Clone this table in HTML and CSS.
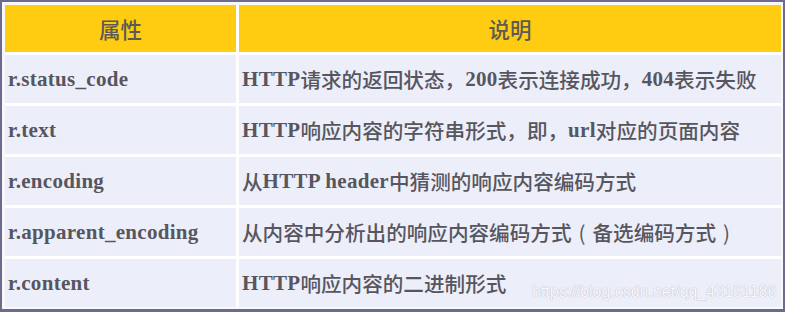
FILE: index.html
```html
<!DOCTYPE html>
<html lang="zh-CN">
<head>
<meta charset="utf-8">
<title>Requests Response 属性</title>
<link rel="stylesheet" href="styles.css">
</head>
<body>
<div class="frame">
  <div class="grid">
    <div class="cell head">属性</div>
    <div class="cell head">说明</div>

    <div class="cell"><span class="en">r.status_code</span></div>
    <div class="cell"><span class="en">HTTP</span>请求的返回状态，<span class="en">200</span>表示连接成功，<span class="en">404</span>表示失败</div>

    <div class="cell"><span class="en">r.text</span></div>
    <div class="cell"><span class="en">HTTP</span>响应内容的字符串形式，即，<span class="en">url</span>对应的页面内容</div>

    <div class="cell"><span class="en">r.encoding</span></div>
    <div class="cell">从<span class="en">HTTP header</span>中猜测的响应内容编码方式</div>

    <div class="cell"><span class="en">r.apparent_encoding</span></div>
    <div class="cell">从内容中分析出的响应内容编码方式<span class="paren">(</span>备选编码方式<span class="paren">)</span></div>

    <div class="cell"><span class="en">r.content</span></div>
    <div class="cell"><span class="en">HTTP</span>响应内容的二进制形式</div>
  </div>
  <div class="watermark">https://blog.csdn.net/qq_43161186</div>
</div>
</body>
</html>
```

FILE: styles.css
```css
html, body {
  margin: 0;
  padding: 0;
  background: #ffffff;
}

.frame {
  position: relative;
  box-sizing: border-box;
  width: 785px;
  height: 312px;
  border: 2px solid #6d6b8d;
  border-bottom-width: 3px;
  padding: 3px 2px 2px 3px;
  background: #f7f7fc;
}

.grid {
  display: grid;
  grid-template-columns: 231px 542px;
  grid-template-rows: 47px repeat(5, 48px);
  gap: 3px;
  background: #ffffff;
}

.cell {
  display: flex;
  align-items: center;
  padding: 0 0 0 3px;
  background: #eceef9;
  color: #57565f;
  font-family: "Noto Sans CJK SC", "Noto Sans", sans-serif;
  font-size: 20.6px;
  font-weight: 500;
  white-space: nowrap;
  overflow: hidden;
}

.cell .en {
  font-family: "Liberation Serif", "Noto Sans CJK SC", serif;
  font-weight: 700;
  font-size: 21px;
  letter-spacing: 0.3px;
}

.cell .paren {
  padding: 0 7px;
  font-weight: 400;
}

.cell.head {
  justify-content: center;
  padding: 0;
  background: #ffcc12;
  color: #5d5a55;
  font-size: 21.5px;
}

.watermark {
  position: absolute;
  left: 530px;
  top: 281px;
  font-family: "Liberation Sans", Arial, sans-serif;
  font-size: 16px;
  color: #f8f8fd;
  text-shadow: 0 0 1px #b5b6c6, 0 0 1px #c5c6d4;
  white-space: nowrap;
}
```
